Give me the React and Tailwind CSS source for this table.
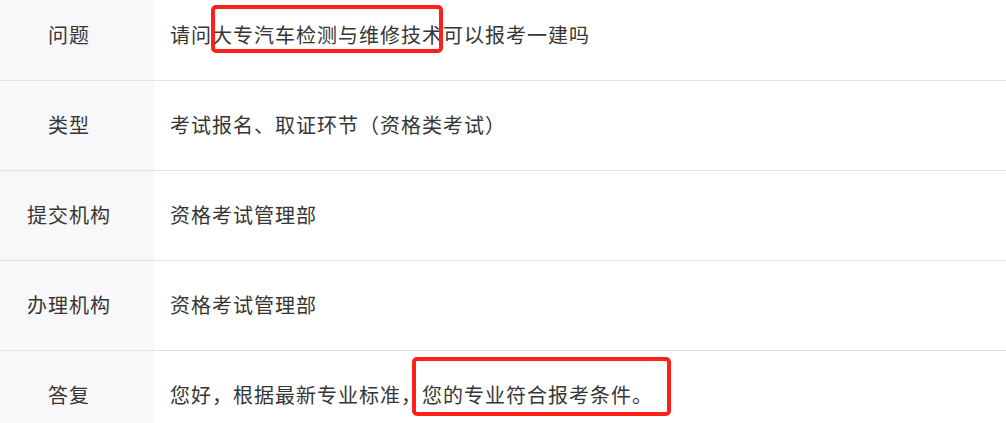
import React from "react";

const rows = [
  ["问题", "请问大专汽车检测与维修技术可以报考一建吗"],
  ["类型", "考试报名、取证环节（资格类考试）"],
  ["提交机构", "资格考试管理部"],
  ["办理机构", "资格考试管理部"],
  ["答复", "您好，根据最新专业标准，您的专业符合报考条件。"],
];

export default function App() {
  return (
    <div
      className="relative w-[1006px] h-[423px] overflow-hidden bg-white text-[#363636]"
      style={{ fontFamily: '"Microsoft YaHei", "Noto Sans CJK SC", "Noto Sans", sans-serif' }}
    >
      <div className="-mt-[9px] flex flex-col">
        {rows.map(([label, value], i) => (
          <div key={i} className="flex h-[90px] border-b border-[#e3e3e3]">
            <div className="w-[154px] shrink-0 bg-[#f8f8fa] pr-[16px] pb-[2px] flex items-center justify-center text-[20px] tracking-[1px]">
              {label}
            </div>
            <div className="flex-1 pl-[16px] pb-[2px] flex items-center text-[20px] tracking-[1px]">
              {value}
            </div>
          </div>
        ))}
      </div>
      <div className="absolute left-[211px] top-[5px] w-[232px] h-[48px] border-[4px] border-[#ff2018] rounded-[5px]" />
      <div className="absolute left-[412px] top-[357px] w-[259px] h-[59px] border-[4px] border-[#ff2018] rounded-[5px]" />
    </div>
  );
}
